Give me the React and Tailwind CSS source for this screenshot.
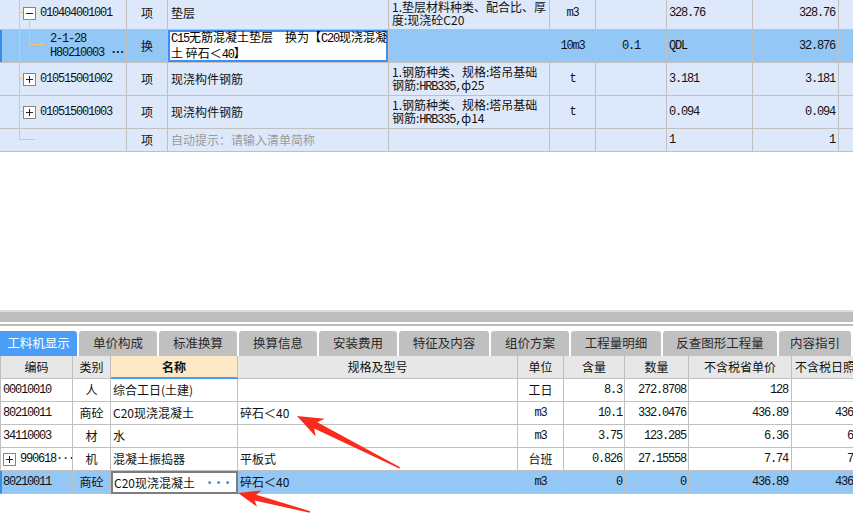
import React from "react";

const mono = "font-[family-name:'Liberation_Mono',monospace] tracking-[-1.2px]";
const topGrid = "grid grid-cols-[127px_41px_221px_161px_46px_71px_86px_86px_40px]";
const botGrid = "grid grid-cols-[73px_38px_127px_280px_46px_61px_64px_103px_83px]";
const cellT = "border-r border-b border-[#c0c0c0] flex items-center min-w-0 overflow-hidden whitespace-nowrap";
const cellB = "border-r border-b border-[#c0c0c0] flex items-center min-w-0 overflow-hidden whitespace-nowrap";

// small tree toggle box
const ToggleBox = ({ open }) => (
  <span className="w-[13px] h-[13px] border border-[#858585] bg-white flex items-center justify-center shrink-0">
    <svg width="9" height="9" viewBox="0 0 9 9">
      <line x1="1" y1="4.5" x2="8" y2="4.5" stroke="#222" strokeWidth="1" />
      {!open && <line x1="4.5" y1="1" x2="4.5" y2="8" stroke="#222" strokeWidth="1" />}
    </svg>
  </span>
);

const TopTable = () => {
  const rowBg = "bg-[#dde9fb]";
  return (
    <div className="relative h-[152px] shrink-0">
      <div className="-mt-[3px]">
        {/* row 1 */}
        <div className={`${topGrid} h-[33px] ${rowBg}`}>
          <div className={`${cellT} pl-[23px] gap-[4px]`}>
            <ToggleBox open />
            <span className={mono}>010404001001</span>
          </div>
          <div className={`${cellT} justify-center`}>项</div>
          <div className={`${cellT} pl-[3px]`}>垫层</div>
          <div className={`${cellT} pl-[3px] leading-[13px]`}>
            <div>1.垫层材料种类、配合比、厚<br />度:现浇砼C20</div>
          </div>
          <div className={`${cellT} justify-center ${mono}`}>m3</div>
          <div className={cellT}></div>
          <div className={`${cellT} pl-[2px] ${mono}`}>328.76</div>
          <div className={`${cellT} justify-end pr-[3px] ${mono}`}>328.76</div>
          <div className={cellT}></div>
        </div>
        {/* row 2 selected */}
        <div className={`${topGrid} h-[33px] bg-[#93c7f6]`}>
          <div className={`${cellT} pl-[50px] shadow-[inset_2px_0_0_#3a8ee8]`}>
            <div className={`${mono} leading-[14px]`}>
              2-1-28<br />H80210003 <b className="tracking-[-3px]">···</b>
            </div>
          </div>
          <div className={`${cellT} justify-center`}>换</div>
          <div className={`${cellT} pl-[3px] bg-white shadow-[inset_0_0_0_2px_#3b8ff2] leading-[14px] text-black`}>
            <div>
              <span className={mono}>C15</span>无筋混凝土垫层　换为【<span className={mono}>C20</span>现浇混凝
              <br />
              土 碎石＜<span className={mono}>40</span>】
            </div>
          </div>
          <div className={cellT}></div>
          <div className={`${cellT} justify-center ${mono}`}>10m3</div>
          <div className={`${cellT} justify-center ${mono}`}>0.1</div>
          <div className={`${cellT} pl-[2px] ${mono}`}>QDL</div>
          <div className={`${cellT} justify-end pr-[3px] ${mono}`}>32.876</div>
          <div className={cellT}></div>
        </div>
        {/* rows 3-4 */}
        {[
          ["010515001002", "ф25", "3.181"],
          ["010515001003", "ф14", "0.094"],
        ].map(([code, dia, qty]) => (
          <div key={code} className={`${topGrid} h-[33px] ${rowBg}`}>
            <div className={`${cellT} pl-[23px] gap-[4px]`}>
              <ToggleBox />
              <span className={mono}>{code}</span>
            </div>
            <div className={`${cellT} justify-center`}>项</div>
            <div className={`${cellT} pl-[3px]`}>现浇构件钢筋</div>
            <div className={`${cellT} pl-[3px] leading-[13px]`}>
              <div>
                1.钢筋种类、规格:塔吊基础
                <br />
                钢筋:<span className={mono}>HRB335,</span>{dia}
              </div>
            </div>
            <div className={`${cellT} justify-center ${mono}`}>t</div>
            <div className={cellT}></div>
            <div className={`${cellT} pl-[2px] ${mono}`}>{qty}</div>
            <div className={`${cellT} justify-end pr-[3px] ${mono}`}>{qty}</div>
            <div className={cellT}></div>
          </div>
        ))}
        {/* row 5 */}
        <div className={`${topGrid} h-[23px] ${rowBg}`}>
          <div className={cellT}></div>
          <div className={`${cellT} justify-center`}>项</div>
          <div className={`${cellT} pl-[3px] text-[#9a9a9a]`}>自动提示：请输入清单简称</div>
          <div className={cellT}></div>
          <div className={cellT}></div>
          <div className={cellT}></div>
          <div className={`${cellT} pl-[2px] ${mono}`}>1</div>
          <div className={`${cellT} justify-end pr-[3px] ${mono}`}>1</div>
          <div className={cellT}></div>
        </div>
      </div>
      {/* tree connector lines */}
      <svg className="absolute left-0 top-0 pointer-events-none" width="60" height="152">
        <g stroke="#f5c27c" strokeWidth="1" fill="none">
          <line x1="19.5" y1="0" x2="19.5" y2="139.5" />
          <line x1="19" y1="12.5" x2="23" y2="12.5" />
          <line x1="19" y1="78.5" x2="23" y2="78.5" />
          <line x1="19" y1="111.5" x2="23" y2="111.5" />
          <line x1="19" y1="139.5" x2="35" y2="139.5" />
          <line x1="29.5" y1="19" x2="29.5" y2="44.5" />
          <line x1="29" y1="44.5" x2="45" y2="44.5" />
        </g>
      </svg>
    </div>
  );
};

const tabs = [
  ["工料机显示", "w-[77px]"],
  ["单价构成", "w-[78px]"],
  ["标准换算", "w-[78px]"],
  ["换算信息", "w-[78px]"],
  ["安装费用", "w-[78px]"],
  ["特征及内容", "w-[90px]"],
  ["组价方案", "w-[78px]"],
  ["工程量明细", "w-[90px]"],
  ["反查图形工程量", "w-[114px]"],
  ["内容指引", "w-[72px]"],
];

const Tabs = () => (
  <div className="flex gap-[2px] h-[25px] shrink-0">
    {tabs.map(([label, w], i) => (
      <div
        key={label}
        className={`${w} shrink-0 rounded-t-[3px] flex items-center justify-center text-[12.5px] ${
          i === 0 ? "bg-[#4a9ef8] text-white rounded-tl-none" : "bg-[#c0c0c0] text-[#2a2a2a]"
        }`}
      >
        {label}
      </div>
    ))}
  </div>
);

const bottomRows = [
  { code: "00010010", type: "人", name: "综合工日(土建)", spec: "", unit: "工日", amt: "8.3", qty: "272.8708", p1: "128", p2: "" },
  { code: "80210011", type: "商砼", name: "C20现浇混凝土", spec: "碎石＜40", unit: "m3", amt: "10.1", qty: "332.0476", p1: "436.89", p2: "436.89" },
  { code: "34110003", type: "材", name: "水", spec: "", unit: "m3", amt: "3.75", qty: "123.285", p1: "6.36", p2: "6.36" },
  { code: "990618···", type: "机", name: "混凝土振捣器", spec: "平板式", unit: "台班", amt: "0.826", qty: "27.15558", p1: "7.74", p2: "7.74", plus: true },
  { code: "80210011", type: "商砼", name: "C20现浇混凝土", spec: "碎石＜40", unit: "m3", amt: "0", qty: "0", p1: "436.89", p2: "436.89", sel: true },
];

const BottomTable = () => (
  <div className="shrink-0">
    {/* header */}
    <div className={`${botGrid} h-[23px] bg-[#e7e7e7]`}>
      <div className={`${cellB} border-l justify-center`}>编码</div>
      <div className={`${cellB} justify-center`}>类别</div>
      <div className="border-r border-[#c0c0c0] border-b-2 border-b-[#4a9ef8] bg-[#fde8c8] flex items-center justify-center font-bold">名称</div>
      <div className={`${cellB} justify-center`}>规格及型号</div>
      <div className={`${cellB} justify-center`}>单位</div>
      <div className={`${cellB} justify-center`}>含量</div>
      <div className={`${cellB} justify-center`}>数量</div>
      <div className={`${cellB} justify-center`}>不含税省单价</div>
      <div className={`${cellB} pl-[3px]`}>不含税日照单价</div>
    </div>
    {bottomRows.map((r, i) => (
      <div key={i} className={`${botGrid} h-[23px] ${r.sel ? "bg-[#93c7f6]" : "bg-white"}`}>
        <div className={`${cellB} border-l ${r.sel ? "border-l-[#3a8ee8] border-l-2 pl-[1px]" : "pl-[2px]"} gap-[4px]`}>
          {r.plus && <ToggleBox />}
          <span className={mono}>{r.code}</span>
        </div>
        <div className={`${cellB} justify-center`}>{r.type}</div>
        {r.sel ? (
          <div className="border-2 border-[#7d7d7d] bg-white flex items-center justify-between pl-[1px] pr-[5px]">
            <span>{r.name}</span>
            <b className="text-[#3a86c8] text-[11px] tracking-[-2px]">···</b>
          </div>
        ) : (
          <div className={`${cellB} pl-[2px]`}>{r.name}</div>
        )}
        <div className={`${cellB} pl-[2px]`}>{r.spec}</div>
        <div className={`${cellB} justify-center ${r.unit === "m3" ? mono : ""}`}>{r.unit}</div>
        <div className={`${cellB} justify-end pr-[2px] ${mono}`}>{r.amt}</div>
        <div className={`${cellB} justify-end pr-[2px] ${mono}`}>{r.qty}</div>
        <div className={`${cellB} justify-end pr-[3px] ${mono}`}>{r.p1}</div>
        <div className={`${cellB} justify-end pr-[3px] ${mono}`}>{r.p2}</div>
      </div>
    ))}
  </div>
);

export default function App() {
  return (
    <div className="relative w-[853px] h-[516px] overflow-hidden bg-white text-[12px] text-[#111] font-[family-name:'Noto_Sans_CJK_SC',sans-serif] flex flex-col">
      <TopTable />
      <div className="h-[158px] shrink-0" />
      {/* splitter */}
      <div className="h-[2px] bg-[#dcdcdc] shrink-0" />
      <div className="h-[10px] bg-[#bdbdbd] shrink-0" />
      <div className="h-[2px] bg-white shrink-0" />
      <div className="h-[2px] bg-[#bdbdbd] shrink-0" />
      <div className="h-[5px] bg-white shrink-0" />
      <Tabs />
      <BottomTable />
      {/* annotation arrows */}
      <svg className="absolute left-0 top-0 pointer-events-none" width="853" height="516">
        <polygon
          fill="#fb2a1c"
          points="297,416 324.7,418.8 317.3,422.3 400.1,467.2 399.3,468.6 314.2,428.6 315.7,436.6"
        />
        <polygon
          fill="#fb2a1c"
          points="238,493 261.4,490.4 256.2,494.7 310.2,511.2 309.8,512.8 254.6,500.5 257.1,506.8"
        />
      </svg>
    </div>
  );
}
